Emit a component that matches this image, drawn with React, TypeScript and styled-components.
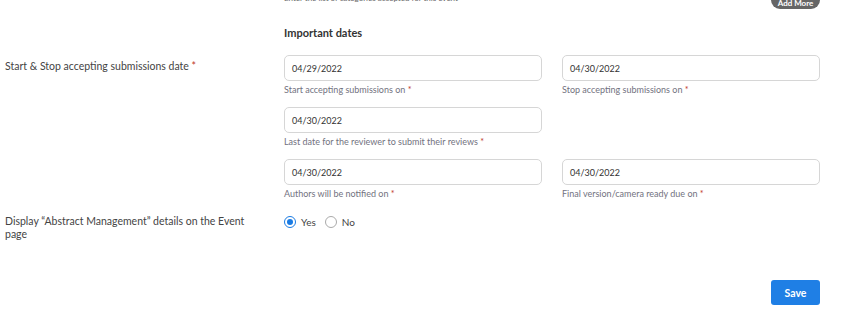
import React from "react";
import styled, { createGlobalStyle } from "styled-components";

const Global = createGlobalStyle`
  html, body { margin: 0; padding: 0; background: #fff; }
  body { font-family: Lato, "Noto Sans", sans-serif; color: #333; overflow: hidden; }
  * { box-sizing: border-box; }
`;

const Page = styled.div`
  width: 856px;
  height: 319px;
  overflow: hidden;
  position: relative;
`;

const Inner = styled.div`
  margin-top: -9px;
  padding-right: 36px;
  display: flex;
  flex-direction: column;
`;

const TopRow = styled.div`
  display: flex;
  justify-content: space-between;
  align-items: flex-end;
  padding-left: 284px;
  height: 18px;
`;

const Hint = styled.div`
  font-size: 8px;
  color: #666;
  line-height: 10px;
  margin-bottom: 6px;
`;

const AddMore = styled.button`
  border: none;
  background: #666;
  color: #fff;
  font-family: inherit;
  font-weight: 700;
  font-size: 8px;
  border-radius: 9px;
  height: 18px;
  width: 49px;
  padding: 6px 0 0;
  line-height: 12px;
`;

const SectionTitle = styled.div`
  padding-left: 284px;
  margin-top: 16px;
  font-size: 11px;
  font-weight: 700;
  color: #333;
  line-height: 16px;
`;

const FieldRow = styled.div<{ $mt: number }>`
  display: grid;
  grid-template-columns: 284px 1fr;
  align-items: start;
  margin-top: ${(p) => p.$mt}px;
`;

const RowLabel = styled.div<{ $pt?: number }>`
  padding-left: 5px;
  font-size: 10.5px;
  color: #444;
  line-height: 13px;
  padding-top: ${(p) => p.$pt ?? 0}px;
  max-width: 262px;
`;

const Req = styled.span`
  color: #c0392b;
`;

const DateGrid = styled.div`
  display: grid;
  grid-template-columns: 258px 258px;
  column-gap: 20px;
  row-gap: 12px;
`;

const Field = styled.div`
  display: flex;
  flex-direction: column;
`;

const Input = styled.div`
  height: 26px;
  border: 1px solid #d6d6d6;
  border-radius: 5px;
  padding-left: 7px;
  display: flex;
  align-items: center;
  font-size: 9px;
  color: #333;
`;

const Helper = styled.div`
  margin-top: 3px;
  font-size: 9px;
  color: #727280;
  line-height: 11px;
`;

const Radios = styled.div`
  display: flex;
  align-items: center;
  gap: 9px;
  padding-top: 1px;
`;

const RadioItem = styled.label`
  display: flex;
  align-items: center;
  gap: 5px;
  font-size: 10px;
  color: #444;
`;

const RadioDot = styled.span<{ $on?: boolean }>`
  width: 12px;
  height: 12px;
  border-radius: 50%;
  border: 1px solid ${(p) => (p.$on ? "#1a7be3" : "#aaa")};
  display: inline-flex;
  align-items: center;
  justify-content: center;
  &::after {
    content: "";
    width: 6px;
    height: 6px;
    border-radius: 50%;
    background: ${(p) => (p.$on ? "#1a7be3" : "transparent")};
  }
`;

const Footer = styled.div`
  display: flex;
  justify-content: flex-end;
  margin-top: 39px;
`;

const SaveButton = styled.button`
  width: 49px;
  height: 25px;
  border: none;
  border-radius: 3px;
  background: #1f7fe5;
  color: #fff;
  font-family: inherit;
  font-weight: 700;
  font-size: 10.5px;
  padding: 0;
`;

const DateField = ({ value, label }: { value: string; label: string }) => (
  <Field>
    <Input>{value}</Input>
    <Helper>
      {label} <Req>*</Req>
    </Helper>
  </Field>
);

export default function App() {
  return (
    <Page>
      <Global />
      <Inner>
        <TopRow>
          <Hint>Enter the list of categories accepted for this event</Hint>
          <AddMore>Add More</AddMore>
        </TopRow>
        <SectionTitle>Important dates</SectionTitle>
        <FieldRow $mt={14}>
          <RowLabel $pt={5}>
            Start &amp; Stop accepting submissions date <Req>*</Req>
          </RowLabel>
          <DateGrid>
            <DateField value="04/29/2022" label="Start accepting submissions on" />
            <DateField value="04/30/2022" label="Stop accepting submissions on" />
            <DateField value="04/30/2022" label="Last date for the reviewer to submit their reviews" />
            <div />
            <DateField value="04/30/2022" label="Authors will be notified on" />
            <DateField value="04/30/2022" label="Final version/camera ready due on" />
          </DateGrid>
        </FieldRow>
        <FieldRow $mt={16}>
          <RowLabel>Display “Abstract Management” details on the Event page</RowLabel>
          <Radios>
            <RadioItem>
              <RadioDot $on /> Yes
            </RadioItem>
            <RadioItem>
              <RadioDot /> No
            </RadioItem>
          </Radios>
        </FieldRow>
        <Footer>
          <SaveButton>Save</SaveButton>
        </Footer>
      </Inner>
    </Page>
  );
}
